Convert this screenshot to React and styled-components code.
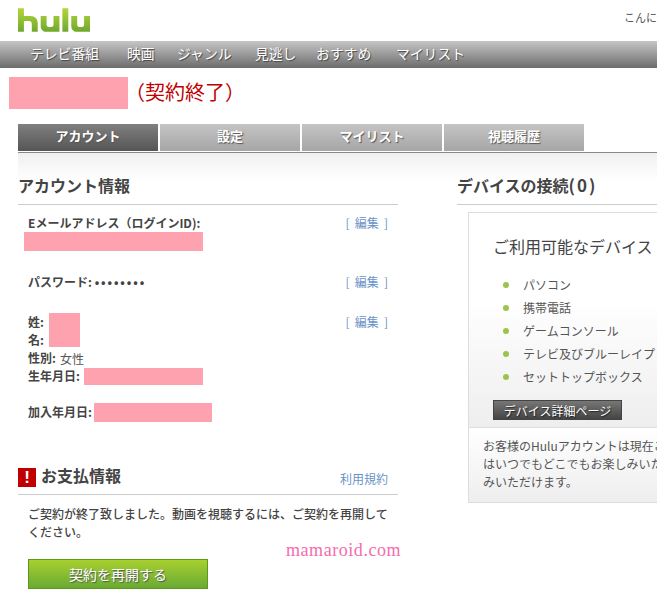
import React from 'react'
import styled, { createGlobalStyle } from 'styled-components'

const Global = createGlobalStyle`
body {
  margin: 0;
  background: #fff;
  overflow: hidden;
  font-family: "Noto Sans CJK JP", "Liberation Sans", sans-serif;
  color: #444;
}
`

const App = () => {
  return (
    <Page>
      <Global />
      <Top>
        <Logo viewBox="0 0 73 24">
          <defs>
            <linearGradient id="hg" x1="0" y1="0" x2="0" y2="1">
              <stop offset="0" stopColor="#b4d63a" />
              <stop offset="1" stopColor="#6fa82e" />
            </linearGradient>
          </defs>
          <path
            fill="url(#hg)"
            d="M0 0h6v8h7c4 0 7 3 7 7v9h-6v-8c0-2-1-3-3-3H6v11H0zM23 8h6v9c0 1 1 2 2 2h3c1 0 2-1 2-2V8h6v16H29c-4 0-6-3-6-6zM45 0h6v24h-6zM54 8h6v9c0 1 1 2 2 2h3c1 0 2-1 2-2V8h6v16H60c-4 0-6-3-6-6z"
          />
        </Logo>
        <Greeting>こんに</Greeting>
      </Top>
      <Nav>
        <NavItem $w={97}>テレビ番組</NavItem>
        <NavItem $w={50}>映画</NavItem>
        <NavItem $w={78}>ジャンル</NavItem>
        <NavItem $w={61}>見逃し</NavItem>
        <NavItem $w={80}>おすすめ</NavItem>
        <NavItem>マイリスト</NavItem>
      </Nav>
      <TitleRow>
        <Mask $w={119} $h={32} />
        <Status>（契約終了）</Status>
      </TitleRow>
      <Tabs>
        <Tab $active>アカウント</Tab>
        <Tab>設定</Tab>
        <Tab>マイリスト</Tab>
        <Tab>視聴履歴</Tab>
      </Tabs>
      <Columns>
        <Left>
          <Heading>アカウント情報</Heading>
          <Block $h={59}>
            <Row>
              <Label>Eメールアドレス（ログインID):</Label>
              <Edit>[ 編集 ]</Edit>
            </Row>
            <EmailMask $w={179} $h={19} />
          </Block>
          <Block $h={40}>
            <Row>
              <Label>パスワード: <Dots>••••••••</Dots></Label>
              <Edit>[ 編集 ]</Edit>
            </Row>
          </Block>
          <Block $h={99}>
            <Row>
              <NameGrid>
                <Label>姓:</Label>
                <NameMask $w={31} $h={34} />
                <Label>名:</Label>
              </NameGrid>
              <Edit>[ 編集 ]</Edit>
            </Row>
            <Line>
              <Label>性別:</Label>
              <Value>女性</Value>
            </Line>
            <Line>
              <Label>生年月日:</Label>
              <BirthMask $w={119} $h={17} />
            </Line>
          </Block>
          <JoinLine>
            <Label>加入年月日:</Label>
            <JoinMask $w={118} $h={19} />
          </JoinLine>
          <PayHead>
            <Alert>!</Alert>
            <PayTitle>お支払情報</PayTitle>
            <Terms>利用規約</Terms>
          </PayHead>
          <Notice>ご契約が終了致しました。動画を視聴するには、ご契約を再開してください。</Notice>
          <Resume>契約を再開する</Resume>
        </Left>
        <Right>
          <Heading>デバイスの接続<Count>(0)</Count></Heading>
          <Card>
            <CardTop>
              <CardTitle>ご利用可能なデバイス</CardTitle>
              <Devices>
                <Device>パソコン</Device>
                <Device>携帯電話</Device>
                <Device>ゲームコンソール</Device>
                <Device>テレビ及びブルーレイプ</Device>
                <Device>セットトップボックス</Device>
              </Devices>
              <DetailButton>デバイス詳細ページ</DetailButton>
            </CardTop>
            <CardBottom>
              <CardLine>お客様のHuluアカウントは現在ご</CardLine>
              <CardLine>はいつでもどこでもお楽しみいた</CardLine>
              <CardLine>みいただけます。</CardLine>
            </CardBottom>
          </Card>
        </Right>
      </Columns>
      <Watermark>mamaroid.com</Watermark>
    </Page>
  )
}

export default App

const Page = styled.div`
position: relative;
width: 657px;
height: 610px;
overflow: hidden;
`
const Top = styled.div`
height: 41px;
box-sizing: border-box;
padding: 8px 0 0 18px;
display: flex;
justify-content: space-between;
`
const Logo = styled.svg`
width: 72px;
height: 24px;
`
const Greeting = styled.div`
width: 33px;
white-space: nowrap;
font-size: 11px;
line-height: 18px;
color: #555;
`
const Nav = styled.div`
height: 27px;
box-sizing: border-box;
padding: 0 0 3px 30px;
display: flex;
align-items: center;
background: linear-gradient(#c6c6c6, #6c6c6c);
`
const NavItem = styled.div`
width: ${p => (p.$w ? p.$w + 'px' : 'auto')};
font-size: 13.8px;
color: #fff;
text-shadow: 1px 1px 1px #444;
`
const TitleRow = styled.div`
margin-top: 9px;
padding-left: 9px;
display: flex;
align-items: center;
`
const Mask = styled.div`
width: ${p => p.$w}px;
height: ${p => p.$h}px;
background: #ffa2b0;
flex-shrink: 0;
`
const Status = styled.div`
font-size: 20px;
line-height: 30px;
padding-bottom: 2px;
color: #c00000;
margin-left: -3px;
`
const Tabs = styled.div`
margin-top: 15px;
margin-left: 18px;
display: flex;
gap: 2px;
border-bottom: 1px solid #888;
height: 28px;
`
const Tab = styled.div`
width: 140px;
height: 27px;
box-sizing: border-box;
padding-bottom: 4px;
display: flex;
align-items: center;
justify-content: center;
font-size: 13px;
font-weight: 700;
color: #fff;
text-shadow: 1px 1px 1px #555;
background: ${p => (p.$active ? 'linear-gradient(#808080, #555)' : 'linear-gradient(#c4c4c4, #a6a6a6)')};
`
const Columns = styled.div`
margin-left: 18px;
padding-top: 22px;
display: flex;
gap: 59px;
background: linear-gradient(#f0f0f0, #fff 28px);
`
const Left = styled.div`
width: 380px;
flex-shrink: 0;
`
const Right = styled.div`
flex: 1;
min-width: 0;
`
const Heading = styled.div`
font-size: 16px;
font-weight: 700;
line-height: 20px;
height: 29px;
border-bottom: 1px solid #ccc;
color: #444;
white-space: nowrap;
`
const Count = styled.span`
font-size: 17px;
letter-spacing: 2px;
`
const Block = styled.div`
height: ${p => p.$h}px;
box-sizing: border-box;
padding: 9px 10px 0;
`
const Row = styled.div`
display: flex;
justify-content: space-between;
align-items: flex-start;
`
const Label = styled.span`
font-size: 12px;
font-weight: 700;
line-height: 18px;
color: #444;
white-space: nowrap;
`
const Dots = styled.span`
letter-spacing: 1.9px;
`
const Edit = styled.a`
font-size: 12px;
line-height: 18px;
word-spacing: 2.5px;
color: #6a93c8;
`
const EmailMask = styled(Mask)`
margin-left: -4px;
`
const NameGrid = styled.div`
display: grid;
grid-template-columns: 21px 31px;
grid-template-rows: 18px 18px;
`
const NameMask = styled(Mask)`
grid-column: 2;
grid-row: 1 / 3;
`
const Line = styled.div`
display: flex;
align-items: center;
height: 18px;
`
const BirthMask = styled(Mask)`
margin-left: 4px;
`
const JoinLine = styled(Line)`
padding-left: 10px;
`
const JoinMask = styled(Mask)`
margin-left: 2px;
`
const Value = styled.span`
font-size: 12px;
margin-left: 4px;
color: #555;
`
const PayHead = styled.div`
margin-top: 38px;
height: 35px;
display: flex;
align-items: center;
border-bottom: 1px solid #ccc;
`
const Alert = styled.div`
width: 18px;
height: 19px;
margin-top: 2px;
background: #c00000;
color: #fff;
font: 700 17px/19px "Liberation Sans", sans-serif;
text-align: center;
`
const PayTitle = styled.div`
margin: 0 0 3px 5px;
font-size: 16px;
font-weight: 700;
flex: 1;
`
const Terms = styled.a`
font-size: 12px;
color: #6a93c8;
margin: 4px 10px 0 0;
`
const Notice = styled.p`
margin: 10px 0 0;
padding: 0 10px;
font-size: 12px;
font-weight: 500;
line-height: 18px;
color: #444;
`
const Resume = styled.button`
display: block;
margin: 18px 0 0 10px;
width: 180px;
height: 30px;
box-sizing: border-box;
padding: 0;
border: 1px solid #5a9a18;
background: linear-gradient(#a8d030, #6aaa34);
color: #fff;
font-family: inherit;
font-size: 14px;
text-shadow: 1px 1px 1px #555;
`
const Card = styled.div`
margin: 7px 0 0 11px;
width: 300px;
border: 1px solid #ddd;
border-right: none;
`
const CardTop = styled.div`
height: 215px;
box-sizing: border-box;
padding: 21px 0 0 24px;
background: linear-gradient(#fff, #fff 40%, #eee);
border-bottom: 1px solid #ddd;
`
const CardTitle = styled.div`
font-size: 16px;
line-height: 24px;
color: #444;
white-space: nowrap;
`
const Devices = styled.ul`
margin: 15px 0 0;
padding: 0 0 0 10px;
list-style: none;
`
const Device = styled.li`
height: 23px;
display: flex;
align-items: center;
font-size: 12px;
color: #555;
white-space: nowrap;
&:before {
  content: "";
  width: 6px;
  height: 6px;
  border-radius: 50%;
  background: #9cc44c;
  margin-right: 14px;
  flex-shrink: 0;
}
`
const DetailButton = styled.button`
display: block;
margin-top: 12px;
width: 129px;
height: 20px;
box-sizing: border-box;
padding: 0;
border: 1px solid #444;
background: linear-gradient(#777, #444);
color: #fff;
font-family: inherit;
font-size: 12px;
text-shadow: 1px 1px 1px #222;
`
const CardBottom = styled.div`
height: 74px;
box-sizing: border-box;
padding: 9px 0 0 14px;
background: linear-gradient(#fff, #eee);
`
const CardLine = styled.div`
font-size: 12px;
line-height: 18px;
color: #555;
white-space: nowrap;
`
const Watermark = styled.div`
position: absolute;
left: 286px;
top: 540px;
font: 18px/20px "Liberation Serif", serif;
color: #f46cab;
letter-spacing: 0.55px;
`
